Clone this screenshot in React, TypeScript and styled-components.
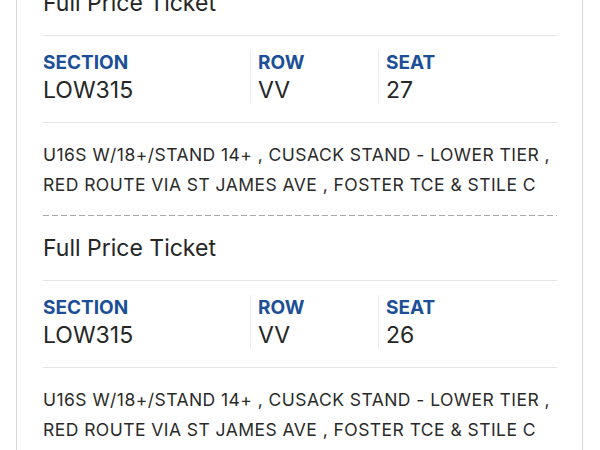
import React from "react";
import styled, { createGlobalStyle } from "styled-components";

const GlobalStyle = createGlobalStyle`
  html, body {
    margin: 0;
    padding: 0;
    background: #ffffff;
    overflow: hidden;
  }
  body {
    font-family: "Inter", "Noto Sans", sans-serif;
    color: #262626;
  }
`;

const Page = styled.div`
  margin-top: -29px;
  padding-left: 16px;
`;

const Card = styled.div`
  width: 514px;
  padding: 0 25px 0 26px;
  border-left: 1px solid #d6d6d6;
  border-right: 1px solid #d6d6d6;
  background: #fff;
`;

const Title = styled.h2`
  margin: 0;
  padding: 16px 0;
  font-size: 23px;
  line-height: 32px;
  font-weight: 400;
  color: #262626;
`;

const InfoRow = styled.div`
  display: grid;
  grid-template-columns: 207px 128px 1fr;
  border-top: 1px solid #e6e6e6;
  padding: 14px 0 18px;
`;

const Cell = styled.div<{ $divider: boolean }>`
  display: flex;
  flex-direction: column;
  padding-left: ${(p) => (p.$divider ? "7px" : "0")};
  border-left: ${(p) => (p.$divider ? "1px solid #ececec" : "none")};
`;

const Label = styled.span`
  font-size: 19px;
  line-height: 26px;
  font-weight: 700;
  color: #1d4f98;
`;

const Value = styled.span`
  font-size: 23px;
  line-height: 28px;
  font-weight: 400;
  color: #262626;
`;

const Description = styled.p`
  margin: 0;
  border-top: 1px solid #e6e6e6;
  padding: 17px 0 15px;
  font-size: 17.5px;
  letter-spacing: 0.45px;
  line-height: 30px;
  color: #2a2a2a;
  white-space: nowrap;
`;

const DashedRule = styled.div`
  height: 1px;
  background: repeating-linear-gradient(
    to right,
    #a9a9a9 0 6px,
    transparent 6px 9px
  );
`;

type TicketData = { section: string; row: string; seat: string };

const tickets: TicketData[] = [
  { section: "LOW315", row: "VV", seat: "27" },
  { section: "LOW315", row: "VV", seat: "26" },
];

const desc = [
  "U16S W/18+/STAND 14+ , CUSACK STAND - LOWER TIER ,",
  "RED ROUTE VIA ST JAMES AVE , FOSTER TCE & STILE C",
];

export default function App() {
  return (
    <>
      <GlobalStyle />
      <Page>
        <Card>
          {tickets.map((t, i) => (
            <React.Fragment key={i}>
              {i > 0 && <DashedRule />}
              <section>
                <Title>Full Price Ticket</Title>
                <InfoRow>
                  <Cell $divider={false}>
                    <Label>SECTION</Label>
                    <Value>{t.section}</Value>
                  </Cell>
                  <Cell $divider>
                    <Label>ROW</Label>
                    <Value>{t.row}</Value>
                  </Cell>
                  <Cell $divider>
                    <Label>SEAT</Label>
                    <Value>{t.seat}</Value>
                  </Cell>
                </InfoRow>
                <Description>
                  {desc[0]}
                  <br />
                  {desc[1]}
                </Description>
              </section>
            </React.Fragment>
          ))}
        </Card>
      </Page>
    </>
  );
}
